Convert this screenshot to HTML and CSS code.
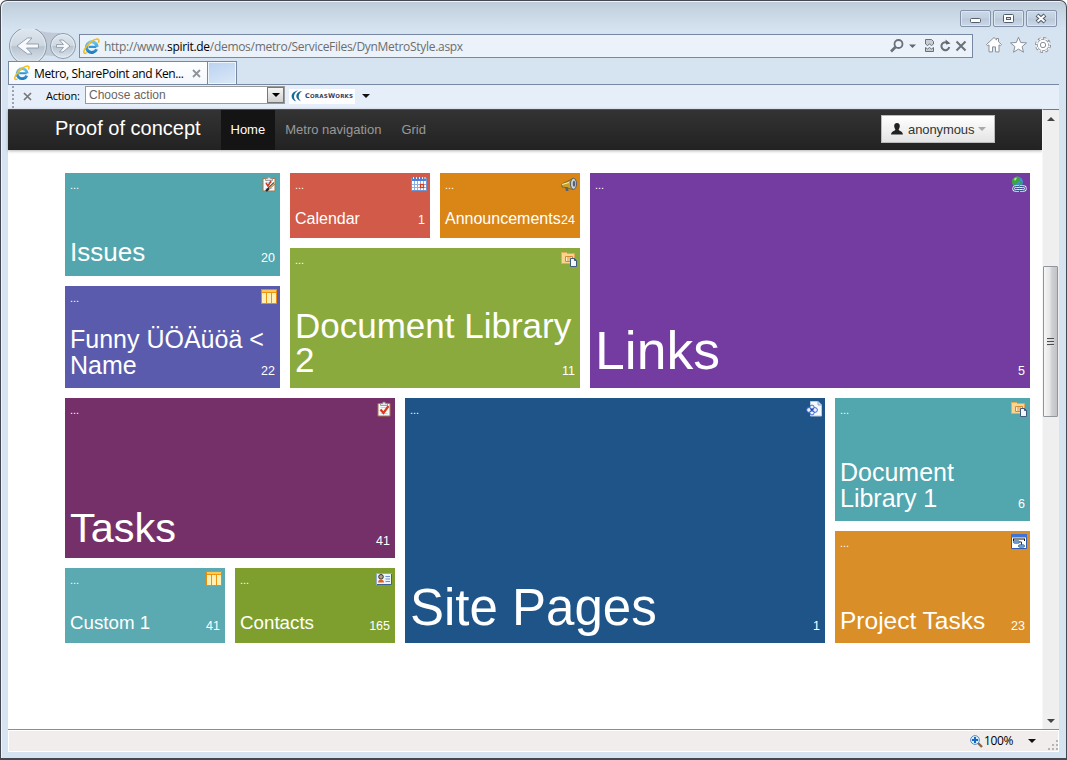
FILE: index.html
```html
<!DOCTYPE html>
<html lang="en">
<head>
<meta charset="utf-8">
<title>Metro, SharePoint and Kendo</title>
<link rel="stylesheet" href="styles.css">
</head>
<body>
<svg class="defs" width="0" height="0">
  <defs>
    <linearGradient id="ieBlue" x1="0" y1="0" x2="0" y2="1"><stop offset="0" stop-color="#6cc5f0"/><stop offset="1" stop-color="#1d7fc6"/></linearGradient>
    <linearGradient id="btnGlass" x1="0" y1="0" x2="0" y2="1"><stop offset="0" stop-color="#dfe8f0"/><stop offset=".48" stop-color="#cfd8e1"/><stop offset=".52" stop-color="#b8c4d0"/><stop offset="1" stop-color="#dde7f0"/></linearGradient>
  </defs>
  <symbol id="ie" viewBox="0 0 16 16">
    <path d="M12.6 8.3H5.2" fill="none" stroke="#2f97d6" stroke-width="2"/>
    <path d="M12.8 10.6A5 5 0 1 1 13.2 8.4" fill="none" stroke="url(#ieBlue)" stroke-width="2.9"/>
    <path d="M3.6 13.8C.8 15.6-.2 13.6 2 9.8 4.4 5.600 9.500 1.200 13.200.9c2-.1 2.200 1.500 1.200 3.600" fill="none" stroke="#f3bd1c" stroke-width="1.500"/>
  </symbol>
  <symbol id="folder" viewBox="0 0 16 16">
    <path d="M.5 12.500V1.500h5l1 1h7v10z" fill="#fbd58f" stroke="#e9a850"/>
    <path d="M4.500 5.500h7v5h-7zM6 7h4M6 9h4" fill="#fff0c9" stroke="#d28a35"/>
    <path d="M9.500 7.500h4l2 2v6h-6z" fill="#f4f8fd" stroke="#40597f"/>
    <path d="M13.500 7.500v2h2" fill="none" stroke="#40597f"/>
  </symbol>
  <symbol id="table" viewBox="0 0 16 16">
    <path d="M.5.5h15v14H.5z" fill="#fff0b5" stroke="#ec8a0c"/>
    <path d="M1 1h14v2.500H1z" fill="#ffc955"/>
    <path d="M1 3.500h14M5.500 4v10M10.500 4v10" stroke="#ef940f" stroke-width="1" fill="none"/>
  </symbol>
  <symbol id="clipboard" viewBox="0 0 16 16">
    <path d="M2 2.500h12v12.500H2z" fill="#f4fbfe" stroke="#a87748"/>
    <path d="M4.500 2.500h2C6.500.6 9.500.6 9.500 2.500h2v2h-7z" fill="#e3e3e5" stroke="#8b8b8b" stroke-width=".8"/>
    <path d="M4.500 12.500h7M4.500 6.500h7" stroke="#bdd8ee" fill="none"/>
  </symbol>
</svg>

<div class="window">
  <header class="titlebar">
    <div class="caption-buttons">
      <span class="caption-btn"><svg width="30" height="16"><rect x="9.500" y="7.500" width="10" height="4" rx="1" fill="#fff" stroke="#535d6e"/></svg></span>
      <span class="caption-btn"><svg width="30" height="16"><rect x="9.500" y="3.500" width="10" height="8" rx="1" fill="#fff" stroke="#535d6e"/><rect x="12.500" y="6.500" width="4" height="2" fill="#dbe3ee" stroke="#535d6e"/></svg></span>
      <span class="caption-btn"><svg width="30" height="16"><path d="M10 4l8 7M18 4l-8 7" stroke="#535d6e" stroke-width="4.200"/><path d="M10.500 4.500l7 6M17.500 4.500l-7 6" stroke="#fff" stroke-width="2"/></svg></span>
    </div>
  </header>

  <div class="navrow">
    <svg class="backfwd" width="71" height="36" viewBox="0 0 71 36">
      <path d="M25 2c9 3 18 4 26 4l8 4-1 20-24-2z" fill="#bfcad6"/>
      <circle cx="20" cy="19" r="18.500" fill="url(#btnGlass)" stroke="#8e9aa9"/>
      <circle cx="20" cy="19" r="17.300" fill="none" stroke="#e7eef5" stroke-width=".8"/>
      <path d="M30.500 17h-12l5.500-6h-4.500L9 19l10.500 8H24l-5.500-6h12z" fill="#f7fafd" stroke="#8d99a7" stroke-width=".9"/>
      <circle cx="55" cy="19" r="12.500" fill="url(#btnGlass)" stroke="#8e9aa9"/>
      <circle cx="55" cy="19" r="11.300" fill="none" stroke="#e7eef5" stroke-width=".8"/>
      <path d="M48.500 17.600h7l-4-4.600h3.500l7 6-7 6h-3.500l4-4.600h-7z" fill="#f7fafd" stroke="#8d99a7" stroke-width=".9"/>
    </svg>
    <div class="address">
      <svg class="ie-icon" width="17" height="17"><use href="#ie"/></svg>
      <span class="url">http://www.<b>spirit.de</b>/demos/metro/ServiceFiles/DynMetroStyle.aspx</span>
      <svg class="address-tools" width="80" height="18" viewBox="0 0 80 18" fill="none" stroke="#6b7078">
        <circle cx="10.500" cy="7" r="4" stroke-width="1.800"/><path d="M7.500 10L3 14.500" stroke-width="2.600"/>
        <path d="M21 7.500h7L24.500 11z" fill="#5f6670" stroke="none"/>
        <path d="M37.500 7V2.500h6l2 2V7l-2 1.500-2-1.500-2 1.500zM37.500 10.500l2 1.500 2-1.500 2 1.500 2-1.500v4h-8z" fill="#c8cdd3"/>
        <path d="M60.500 6.600a4 4 0 1 0 .8 3.500" stroke-width="2"/><path d="M57.500 2.500l.5 5 4.500-1z" fill="#5f6670" stroke="none"/>
        <path d="M68.500 4.500l9 9M77.500 4.500l-9 9" stroke-width="2"/>
      </svg>
    </div>
    <svg class="browser-tools" width="68" height="18" viewBox="0 0 68 18" fill="#fff" stroke="#8a9099">
      <path d="M1.500 8.500L9 1.500l2.500 2.400V2.500h2v3.300l3 2.700-1 1.200-1.500-.8v7h-3.500v-5h-3v5H4v-7l-1.500.8z"/>
      <path d="M33.500 1.200l2.200 5.300 5.800.4-4.400 3.700 1.400 5.600-5-3.100-5 3.100 1.400-5.600-4.400-3.700 5.800-.4z"/>
      <circle cx="58" cy="9" r="6.700" stroke-width="2.600" stroke-dasharray="2.900 2.360"/>
      <circle cx="58" cy="9" r="5.700" stroke-width=".9"/>
      <circle cx="58" cy="9" r="6.300" fill="none" stroke="#fff" stroke-width="1.600" stroke-dasharray="1.700 3.250" stroke-dashoffset="-.5"/>
      <circle cx="58" cy="9" r="2.700"/>
    </svg>
  </div>

  <div class="tabrow">
    <div class="tab">
      <svg width="16" height="16"><use href="#ie"/></svg>
      <span class="tab-title">Metro, SharePoint and Ken...</span>
      <svg class="tab-close" width="9" height="9"><path d="M1 1l7 7M8 1l-7 7" stroke="#8f949b" stroke-width="1.800"/></svg>
    </div>
    <div class="newtab"></div>
  </div>

  <div class="toolbar">
    <span class="grip"></span>
    <svg class="bar-close" width="9" height="9"><path d="M1 1l7 7M8 1l-7 7" stroke="#777" stroke-width="1.700"/></svg>
    <span class="bar-label">Action:</span>
    <div class="combo"><span>Choose action</span><i class="combo-btn"></i></div>
    <div class="coras">
      <svg width="12" height="12" viewBox="0 0 12 12"><path d="M7 .5C-1.500 2-1 10 5.500 11.500 1.500 8.500 2.500 3 7 .5z" fill="#176a95"/><path d="M11.500.8C3 2.500 4 9.500 10 11.200 6.500 8.500 7 3.500 11.500.8z" fill="#176a95"/></svg>
      <span>C<small>ORAS</small>W<small>ORKS</small></span>
    </div>
    <i class="arrow"></i>
  </div>

  <div class="viewport">
    <main class="page">
      <nav class="navbar">
        <span class="brand">Proof of concept</span>
        <span class="nav-item active">Home</span>
        <span class="nav-item">Metro navigation</span>
        <span class="nav-item">Grid</span>
        <div class="user">
          <svg width="12" height="12" viewBox="0 0 12 12"><path d="M6 0c2 0 3 1.400 2.800 3.200C8.700 4.800 8 5.600 7.600 6.600c0 1.400 4.200 1.700 4.400 5H0C.2 8.300 4.400 8 4.400 6.600 4 5.600 3.300 4.800 3.200 3.200 3 1.400 4 0 6 0z" fill="#222"/></svg>
          <span>anonymous</span><i class="caret"></i>
        </div>
      </nav>

      <section class="tiles">
        <div class="band top">
          <div class="col col-a">
            <article class="tile issues"><span class="dots">...</span><h2>Issues</h2><em>20</em>
              <svg class="icon"><use href="#clipboard"/><path d="M5 7l2 3 3-5" fill="none" stroke="#d9371c" stroke-width="1.600"/><path d="M5 15l8.500-8" stroke="#222" stroke-width="2.400"/><path d="M8 12.500L14 7" stroke="#f0b35c" stroke-width="1.200"/></svg></article>
            <article class="tile funny"><span class="dots">...</span><h2>Funny ÜÖÄüöä &lt;<br>Name</h2><em>22</em>
              <svg class="icon"><use href="#table"/></svg></article>
          </div>
          <div class="col col-b">
            <div class="pair">
              <article class="tile calendar"><span class="dots">...</span><h2>Calendar</h2><em>1</em>
                <svg class="icon"><path d="M.5 2.500h15v12H.5z" fill="#fff" stroke="#6f94cf"/><path d="M1 2h14v3H1z" fill="#4f80d2"/><path d="M2.500 1v2M5.500 1v2M8.500 1v2M11.500 1v2M14 1v2" stroke="#e8f0fc"/><path d="M1 8.500h14M1 11.500h14M3.500 5v9M6.500 5v9M9.500 5v9M12.500 5v9" stroke="#8fb0de"/><rect x="9.500" y="8.500" width="3" height="3" fill="#fff" stroke="#e33b16" stroke-width="1.300"/></svg></article>
              <article class="tile announce"><span class="dots">...</span><h2>Announcements</h2><em>24</em>
                <svg class="icon"><g transform="translate(0 1)"><path d="M1 7l3-1.500 8-4v11L5 10.500 1 10z" fill="#c9a22e" stroke="#6c5d2c" stroke-width=".8"/><path d="M4 10l1 4h2.500L7 10.500z" fill="#57606b"/><path d="M1 7.500l7-2" stroke="#fff0a0"/><ellipse cx="12.500" cy="6.800" rx="3" ry="5.500" fill="#cdd3da" stroke="#505963"/><ellipse cx="13" cy="6.800" rx="1.300" ry="3" fill="#59616b"/></g></svg></article>
            </div>
            <article class="tile doclib2"><span class="dots">...</span><h2>Document Library<br>2</h2><em>11</em>
              <svg class="icon"><use href="#folder"/></svg></article>
          </div>
          <article class="tile links"><span class="dots">...</span><h2>Links</h2><em>5</em>
            <svg class="icon"><circle cx="6.500" cy="6" r="5.500" fill="#3c8fd0"/><path d="M3 2c2-2 5-2 6 0S7 5 6 7 4 10 2 8 1 4 3 2zM9.500 5c2 0 2 2 1 4l-2-1z" fill="#3fa43a"/><path d="M3 3c1-1.500 2.500-1.500 3-1L4 5z" fill="#b9e79b"/><g fill="none"><path d="M8 10.500H4.500a2 2 0 0 0 0 4H8M9 10.500h3.500a2 2 0 0 1 0 4H9M6 12.500h5" stroke="#dcebf7" stroke-width="2.400"/><path d="M8 10.500H4.500a2 2 0 0 0 0 4H8M9 10.500h3.500a2 2 0 0 1 0 4H9M6 12.500h5" stroke="#335b80" stroke-width="1"/></g></svg></article>
        </div>
        <div class="band bottom">
          <div class="col col-c">
            <article class="tile tasks"><span class="dots">...</span><h2>Tasks</h2><em>41</em>
              <svg class="icon"><use href="#clipboard"/><path d="M4.500 8.500l3 3.500 5-7" fill="none" stroke="#dc3a20" stroke-width="2.200"/></svg></article>
            <div class="pair wide">
              <article class="tile custom"><span class="dots">...</span><h2>Custom 1</h2><em>41</em>
                <svg class="icon"><use href="#table"/></svg></article>
              <article class="tile contacts"><span class="dots">...</span><h2>Contacts</h2><em>165</em>
                <svg class="icon"><path d="M.5 2.500h15v11H.5z" fill="#eef4fc" stroke="#93a9ca"/><path d="M1 13.500h14.500V3" fill="none" stroke="#3f5f97"/><circle cx="5" cy="5.800" r="2.300" fill="#b9a18c" stroke="#333"/><path d="M2 11.500c0-4 6-4 6 0z" fill="#d9621d"/><path d="M9.500 5.500H14M9.500 8H14M9.500 10.500H14" stroke="#6d93cf"/></svg></article>
            </div>
          </div>
          <article class="tile sitepages"><span class="dots">...</span><h2>Site Pages</h2><em>1</em>
            <svg class="icon"><path d="M4.500.5H12L15.500 4v11h-11z" fill="#f6f9fd" stroke="#b9c9de"/><path d="M12 .5V4h3.500" fill="#d6e2f2" stroke="#8ea7c9"/><g fill="#e8f1ff" stroke="#2f5fc8" stroke-width=".9"><circle cx="6" cy="6.300" r="2.200"/><circle cx="3" cy="9" r="2.400"/><circle cx="9" cy="9" r="2.400"/><circle cx="6" cy="11.700" r="2.200"/></g><path d="M4.500 7.500l3 3M7.500 7.500l-3 3" stroke="#1c40b4" stroke-width="1.200"/></svg></article>
          <div class="col col-d">
            <article class="tile doclib1"><span class="dots">...</span><h2>Document<br>Library 1</h2><em>6</em>
              <svg class="icon"><use href="#folder"/></svg></article>
            <article class="tile project"><span class="dots">...</span><h2>Project Tasks</h2><em>23</em>
              <svg class="icon"><path d="M.5.5h15v14H.5z" fill="#fff" stroke="#2e5bb4"/><path d="M0 0h16v3.500H0z" fill="#3f73d6"/><path d="M2 5h12M2.500 5v2M13.500 5v2" stroke="#111" fill="none"/><path d="M8.500 8h2v3" stroke="#333" fill="none"/><rect x="2.500" y="6.800" width="6" height="2.400" rx="1.200" fill="#7fb2e6" stroke="#25558f" stroke-width=".8"/><rect x="7.500" y="10.800" width="6" height="2.400" rx="1.200" fill="#7fb2e6" stroke="#25558f" stroke-width=".8"/></svg></article>
          </div>
        </div>
      </section>
    </main>
    <aside class="scrollbar">
      <i class="sb-up"></i>
      <div class="sb-track"><div class="sb-thumb"><i></i><i></i><i></i></div></div>
      <i class="sb-down"></i>
    </aside>
  </div>

  <footer class="status">
    <svg width="13" height="13" viewBox="0 0 13 13"><path d="M8 8l4 4" stroke="#8a6446" stroke-width="2.400"/><circle cx="5" cy="5" r="4.400" fill="#d9ecfa" stroke="#5c8fc0"/><path d="M5 2v6M2 5h6" stroke="#1669c0" stroke-width="2"/></svg>
    <span class="zoom">100%</span>
    <i class="arrow"></i>
    <svg class="sizer" width="10" height="10" fill="#b4b4b6"><path d="M8 0h2v2H8zM4 4h2v2H4zM8 4h2v2H8zM0 8h2v2H0zM4 8h2v2H4zM8 8h2v2H8z"/></svg>
  </footer>
</div>
</body>
</html>
```
FILE: styles.css
```css
* { box-sizing: border-box; }
html { background: #fff; }
body { margin: 0; font-family: "Liberation Sans", Arial, sans-serif; }
.defs { position: absolute; }
svg { display: block; flex: none; }

.window {
  width: 1067px;
  height: 760px;
  display: flex;
  flex-direction: column;
  padding: 0 7px;
  border: 1px solid #454850;
  border-bottom-width: 2px;
  border-radius: 7px 7px 0 0;
  background: linear-gradient(#bccad9 0, #c9d7e5 12px, #d6e3f1 30px, #d6e4f2 100%);
  box-shadow: inset 1px 1px 0 #eef4fa;
  overflow: hidden;
}

/* window chrome */
.titlebar { height: 28px; flex: none; display: flex; justify-content: flex-end; padding: 9px 2px 0 0; }
.caption-buttons { display: flex; gap: 2px; height: 18px; }
.caption-btn {
  width: 31px;
  height: 17px;
  border: 1px solid #8391aa;
  border-radius: 2px;
  background: linear-gradient(#ccd8e6, #c1cfdf 48%, #b9c8da 52%, #cbd8e6);
  box-shadow: inset 0 0 0 1px #dce6f0;
  overflow: hidden;
}
.navrow { height: 32px; flex: none; display: flex; align-items: flex-start; overflow: hidden; }
.backfwd { margin-top: -2px; }
.address {
  width: 894px;
  height: 24px;
  margin-top: 5px;
  display: flex;
  align-items: center;
  border: 1px solid #7688a3;
  background: #ebf2fa;
  padding: 0 4px 0 3px;
}
.url { margin-left: 4px; font: 12px "Open Sans", sans-serif; letter-spacing: -.3px; color: #6d6d6d; white-space: nowrap; flex: 1; }
.url b { color: #000; font-weight: normal; }
.browser-tools { margin: 7px 0 0 12px; }

.tabrow { height: 23px; flex: none; display: flex; }
.tab {
  width: 200px;
  height: 23px;
  display: flex;
  align-items: center;
  padding-left: 5px;
  border: 1px solid #7688a3;
  border-bottom: 0;
  background: linear-gradient(#fff, #f3f7fd);
}
.tab-title { width: 158px; margin-left: 4px; font: 12px "Open Sans", sans-serif; letter-spacing: -.37px; color: #000; white-space: nowrap; }
.newtab {
  width: 30px;
  height: 23px;
  margin-left: -1px;
  border: 1px solid #7688a3;
  border-bottom: 0;
  background: linear-gradient(160deg, #b9d1ef, #dce9f8);
  box-shadow: inset 0 0 0 1px #eef5fc;
}

.toolbar {
  height: 25px;
  flex: none;
  display: flex;
  align-items: center;
  padding-bottom: 1px;
  border-top: 1px solid #7688a3;
  background: #e6eefa;
}
.grip { width: 2px; height: 22px; margin: 0 0 0 4px; background: repeating-linear-gradient(#9ba3b0 0 2px, transparent 2px 4px); }
.bar-close { margin-left: 9px; }
.bar-label { width: 39px; margin: -2px 0 0 14px; font: 11px "Open Sans", sans-serif; letter-spacing: -.2px; color: #000; white-space: nowrap; }
.combo {
  width: 200px;
  height: 18px;
  margin-top: -3px;
  display: flex;
  align-items: center;
  justify-content: space-between;
  padding-left: 3px;
  border: 1px solid #9a9a9a;
  background: #fff;
  font-size: 12px;
  color: #666;
}
.combo-btn {
  width: 17px;
  height: 16px;
  display: grid;
  place-items: center;
  border: 1px solid #777;
  background: linear-gradient(#f5f5f5, #d0d0d0);
}
.combo-btn::after { content: ""; border: 4px solid transparent; border-top-color: #000; border-bottom: 0; }
.coras { width: 66px; height: 15px; margin: -1px 0 0 4px; display: flex; align-items: center; gap: 2px; padding-left: 2px; background: #fff; font: bold 6.500px "DejaVu Sans", sans-serif; letter-spacing: .2px; color: #39415f; white-space: nowrap; }
.coras small { font-size: 5.500px; }
.arrow { width: 0; height: 0; border: 4px solid transparent; border-top-color: #111; border-bottom: 0; }
.toolbar .arrow { margin: -2px 0 0 7px; }

/* document area */
.viewport { height: 621px; flex: none; display: flex; background: #fff; border-bottom: 1px solid #8c8f86; }
.page { width: 1034px; display: flex; flex-direction: column; }
.navbar {
  height: 41px;
  flex: none;
  display: flex;
  align-items: center;
  padding-left: 47px;
  background: linear-gradient(#333, #222);
  border-top: 1px solid #4c4f55;
  box-shadow: 0 1px 3px rgba(0, 0, 0, .3);
  color: #999;
  font-size: 13px;
}
.brand { width: 166px; font-size: 20px; color: #fff; padding-bottom: 3px; white-space: nowrap; }
.nav-item { height: 40px; line-height: 39px; padding: 0 10px; white-space: nowrap; }
.nav-item.active { margin-right: .6px; background: #141414; color: #fff; padding: 0 9.500px; }
.user {
  width: 114px;
  height: 28px;
  margin: 0 47px 2px auto;
  display: flex;
  align-items: center;
  padding-left: 9px;
  gap: 5px;
  border: 1px solid #bbb;
  background: linear-gradient(#fff, #e4e4e4);
  color: #333;
}
.user span { letter-spacing: -.1px; }
.caret { border: 4px solid transparent; border-top-color: #aaa; border-bottom: 0; margin-left: -1px; }

.tiles { display: flex; flex-direction: column; gap: 10px; padding: 23px 0 0 57px; }
.band { display: flex; gap: 10px; }
.top { height: 215px; }
.bottom { height: 245px; }
.col { display: flex; flex-direction: column; gap: 10px; }
.col-a { width: 215px; }
.col-b { width: 290px; }
.col-c { width: 330px; }
.col-d { width: 195px; }
.pair { display: flex; gap: 10px; height: 65px; }
.pair.wide { height: 75px; }
.pair .tile { flex: 1 1 0; min-width: 0; }

.tile { position: relative; display: flex; flex-direction: column; justify-content: space-between; align-items: flex-start; padding: 6px 0 10px 5px; color: #fff; }
.tile h2 { margin: 0; font-size: inherit; font-weight: normal; line-height: 1; white-space: nowrap; }
.dots { font-size: 11px; line-height: 12px; }
.tile em { position: absolute; right: 5px; bottom: 9px; font: 12.500px/15px "Liberation Sans", Arial, sans-serif; }
.icon { position: absolute; top: 3px; right: 3px; width: 16px; height: 16px; overflow: hidden; }

.issues { height: 103px; background: #53a6ad; font-size: 26px; padding-bottom: 11px; }
.funny { height: 102px; background: #5b5bae; font-size: 25px; }
.calendar { background: #d25a48; font-size: 16px; padding-bottom: 11px; }
.announce { background: #d98617; font-size: 16px; padding-bottom: 11px; }
.doclib2 { height: 140px; background: #8aaa3e; font-size: 35px; padding-bottom: 11px; }
.links { width: 440px; background: #743ba1; font-size: 53.500px; padding-bottom: 11px; }
.tasks { height: 160px; background: #763069; font-size: 41.500px; }
.custom { background: #5ba9b1; font-size: 18.750px; }
.contacts { background: #7e9f2d; font-size: 18.750px; }
.sitepages { width: 420px; background: #1f5489; font-size: 51px; }
.doclib1 { height: 123px; background: #52a6ae; font-size: 25px; }
.project { height: 112px; background: #da8e27; font-size: 24.500px; }
.tile.funny h2, .tile.doclib1 h2 { line-height: 26px; }
.tile.doclib2 h2 { line-height: 34px; }
.tile.calendar em, .tile.announce em, .tile.issues em { bottom: 10px; }

.issues em { bottom: 9px; }

/* scrollbar */
.scrollbar { width: 17px; display: flex; flex-direction: column; align-items: center; background: #efefef; border-left: 1px solid #f7f7f7; border-top: 1px solid #777; }
.sb-up { margin: 7px 0 0; border: 4px solid transparent; border-bottom-color: #444; border-top: 0; }
.sb-down { margin: auto 0 6px; border: 4px solid transparent; border-top-color: #444; border-bottom: 0; }
.sb-track { width: 100%; height: 296px; padding-top: 145px; }
.sb-thumb {
  width: 15px;
  height: 151px;
  display: flex;
  flex-direction: column;
  align-items: center;
  justify-content: center;
  gap: 1px;
  border: 1px solid #92959b;
  border-radius: 1px;
  background: linear-gradient(90deg, #f6f6f6, #e6e6e8 45%, #cfd0d4 60%, #c2c3c8);
}
.sb-thumb i { width: 7px; height: 2px; background: #4d4d50; border-bottom: 1px solid #ddd; }

.status { height: 22px; flex: none; display: flex; align-items: center; border: 1px solid #fff; background: #f0edec; padding-left: 961px; }
.zoom { width: 45px; margin: -1px 0 0 1px; font: 12px "Open Sans", sans-serif; letter-spacing: -.4px; color: #000; }
.sizer { margin: 8px 0 0 12px; }
```
